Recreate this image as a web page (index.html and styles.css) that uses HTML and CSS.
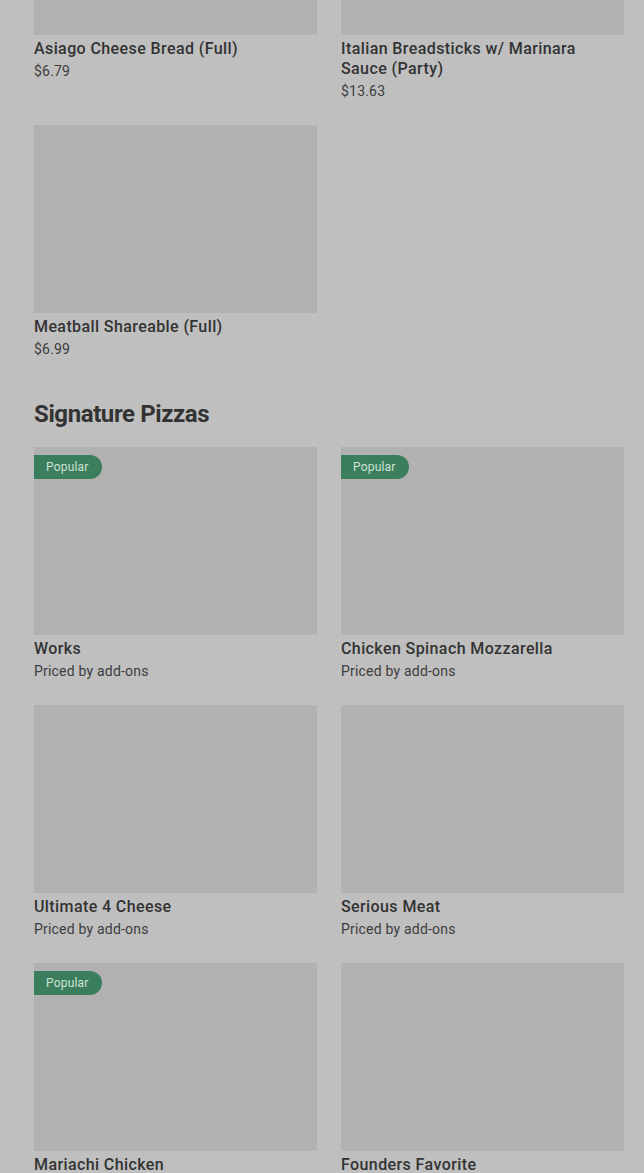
FILE: index.html
```html
<!DOCTYPE html>
<html lang="en">
<head>
    <meta charset="UTF-8">
    <meta name="viewport" content="width=device-width, initial-scale=1.0">
    <title>Menu</title>
    <link rel="stylesheet" href="styles.css">
</head>
<body>
    <div class="menu">
        <div class="grid first">
            <div class="item">
                <div class="photo"></div>
                <div class="name">Asiago Cheese Bread (Full)</div>
                <div class="price">$6.79</div>
            </div>
            <div class="item">
                <div class="photo"></div>
                <div class="name">Italian Breadsticks w/ Marinara Sauce (Party)</div>
                <div class="price">$13.63</div>
            </div>
            <div class="item">
                <div class="photo"></div>
                <div class="name">Meatball Shareable (Full)</div>
                <div class="price">$6.99</div>
            </div>
        </div>

        <h2 class="section-title">Signature Pizzas</h2>
        <div class="grid">
            <div class="item">
                <div class="photo"><span class="badge">Popular</span></div>
                <div class="name">Works</div>
                <div class="price">Priced by add-ons</div>
            </div>
            <div class="item">
                <div class="photo"><span class="badge">Popular</span></div>
                <div class="name">Chicken Spinach Mozzarella</div>
                <div class="price">Priced by add-ons</div>
            </div>
            <div class="item">
                <div class="photo"></div>
                <div class="name">Ultimate 4 Cheese</div>
                <div class="price">Priced by add-ons</div>
            </div>
            <div class="item">
                <div class="photo"></div>
                <div class="name">Serious Meat</div>
                <div class="price">Priced by add-ons</div>
            </div>
            <div class="item">
                <div class="photo"><span class="badge">Popular</span></div>
                <div class="name">Mariachi Chicken</div>
                <div class="price">Priced by add-ons</div>
            </div>
            <div class="item">
                <div class="photo"></div>
                <div class="name">Founders Favorite</div>
                <div class="price">Priced by add-ons</div>
            </div>
        </div>
    </div>
</body>
</html>
```

FILE: styles.css
```css
body, html {
    margin: 0;
    padding: 0;
    background-color: #bfbfbf;
    font-family: Roboto, "Liberation Sans", sans-serif;
    color: #333;
    overflow: hidden;
}
.menu {
    padding: 0 20px 0 34px;
}
.grid {
    display: grid;
    grid-template-columns: 1fr 1fr;
    column-gap: 24px;
    row-gap: 24px;
}
.first {
    margin-top: -153px;
}
.photo {
    position: relative;
    height: 188px;
    background-color: #b1b1b1;
}
.badge {
    position: absolute;
    left: 0;
    top: 8px;
    height: 24px;
    line-height: 24px;
    padding: 0 13px 0 12px;
    font-size: 12px;
    letter-spacing: 0.2px;
    color: #cfe2d6;
    background-color: #3b7e5d;
    border-radius: 0 12px 12px 0;
}
.name {
    margin-top: 4px;
    font-size: 16px;
    font-weight: 500;
    line-height: 20px;
    letter-spacing: 0.4px;
}
.price {
    margin-top: 2px;
    font-size: 14px;
    line-height: 20px;
    letter-spacing: 0.2px;
    color: #3d3d3d;
}
.section-title {
    margin: 41px 0 19px;
    font-size: 24px;
    font-weight: 700;
    line-height: 28px;
    letter-spacing: -0.4px;
}
```
